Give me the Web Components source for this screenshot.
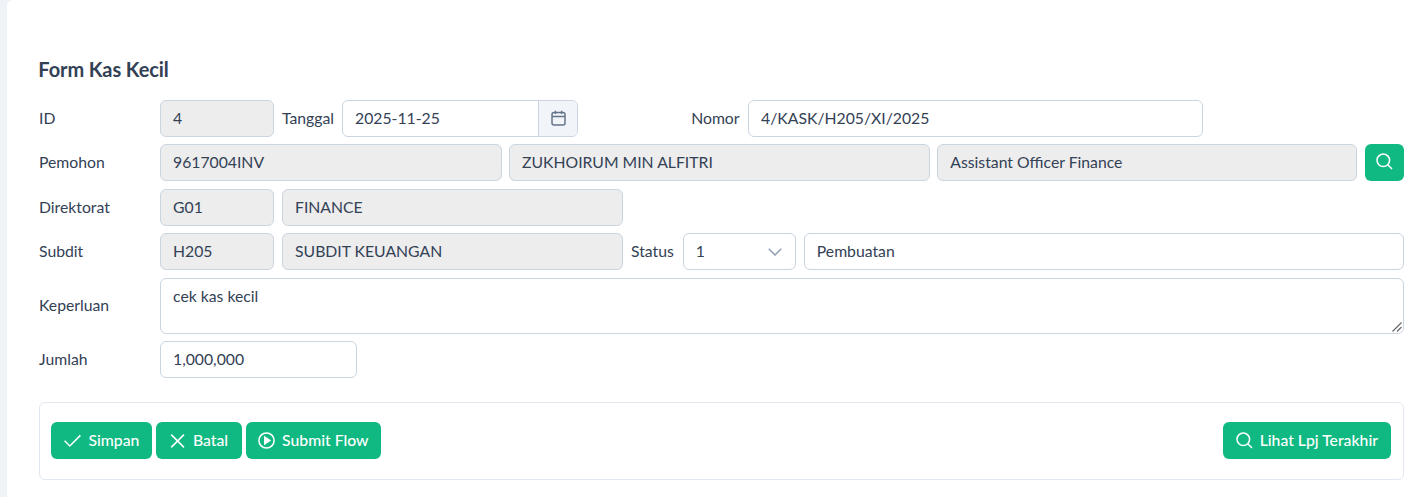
<!DOCTYPE html>
<html lang="id">
<head>
<meta charset="utf-8">
<title>Form Kas Kecil</title>
<style>
  html, body { margin: 0; height: 100%; overflow: hidden; background: #eff3f8; }
  body { font-family: Lato, "Liberation Sans", sans-serif; font-size: 15.75px; color: #334155; }
</style>
</head>
<body>
<kas-page>
  <form-row label="ID">
    <form-field w="114" disabled>4</form-field>
    <inline-label>Tanggal</inline-label>
    <form-field w="236" addon>2025-11-25</form-field>
    <inline-label style="margin-left:105.2px;margin-right:.5px">Nomor</inline-label>
    <form-field w="455">4/KASK/H205/XI/2025</form-field>
  </form-row>
  <form-row label="Pemohon" tight>
    <form-field w="341.75" disabled>9617004INV</form-field>
    <form-field w="421" disabled>ZUKHOIRUM MIN ALFITRI</form-field>
    <form-field w="420" disabled>Assistant Officer Finance</form-field>
    <app-button icon="search" square></app-button>
  </form-row>
  <form-row label="Direktorat">
    <form-field w="114" disabled>G01</form-field>
    <form-field w="341" disabled>FINANCE</form-field>
  </form-row>
  <form-row label="Subdit">
    <form-field w="114" disabled>H205</form-field>
    <form-field w="341" disabled>SUBDIT KEUANGAN</form-field>
    <inline-label style="margin-right:1px">Status</inline-label>
    <form-field w="113" select>1</form-field>
    <form-field w="600">Pembuatan</form-field>
  </form-row>
  <form-row label="Keperluan">
    <form-area>cek kas kecil</form-area>
  </form-row>
  <form-row label="Jumlah">
    <form-field w="197">1,000,000</form-field>
  </form-row>
  <action-bar>
    <app-button icon="check">Simpan</app-button>
    <app-button icon="times">Batal</app-button>
    <app-button icon="play">Submit Flow</app-button>
    <app-button icon="search" slot="end">Lihat Lpj Terakhir</app-button>
  </action-bar>
</kas-page>

<script>
const ICONS = {
  search: '<circle cx="7.3" cy="7.3" r="6.3"/><path d="M11.8 11.8 16 16"/>',
  check: '<path d="M.6 8.8 5.8 14 16.4 3.4"/>',
  times: '<path d="M2.2 2.6 15 15.4M15 2.6 2.2 15.4"/>',
  play: '<circle cx="8.5" cy="8.5" r="7.6"/><path d="M6.8 5.2 11.8 8.5 6.8 11.8Z" fill="currentColor"/>'
};

class KasPage extends HTMLElement {
  connectedCallback() {
    this.attachShadow({ mode: 'open' });
    this.shadowRoot.innerHTML = `
      <style>
        :host {
          display: block;
          box-sizing: border-box;
          height: 497px;
          margin-left: 7px;
          padding: 57px 22px 0 32px;
          background: #fff;
          border-radius: 6px 0 0 0;
        }
        h5 {
          margin: 0 0 18.75px -.7px;
          font-size: 20px;
          line-height: 24px;
          font-weight: 700;
          letter-spacing: -.1px;
          color: #334155;
        }
        .rows { display: flex; flex-direction: column; gap: 7.5px; }
      </style>
      <h5>Form Kas Kecil</h5>
      <div class="rows"><slot></slot></div>
    `;
  }
}

class FormRow extends HTMLElement {
  connectedCallback() {
    this.attachShadow({ mode: 'open' });
    this.shadowRoot.innerHTML = `
      <style>
        :host { display: flex; align-items: center; }
        .label { flex: none; width: 121px; margin-top: -2px; }
        .items { flex: 1; min-width: 0; display: flex; align-items: center; gap: 8px; }
        :host([tight]) .items { gap: 7.25px; }
      </style>
      <div class="label">${this.getAttribute('label')}</div>
      <div class="items"><slot></slot></div>
    `;
  }
}

class InlineLabel extends HTMLElement {
  connectedCallback() {
    this.attachShadow({ mode: 'open' });
    this.shadowRoot.innerHTML = `<style>:host { display: block; flex: none; margin-top: -2px; }</style><slot></slot>`;
  }
}

class FormField extends HTMLElement {
  connectedCallback() {
    this.attachShadow({ mode: 'open' });
    const addon = this.hasAttribute('addon') ? `
      <div class="addon">
        <svg width="15" height="16" viewBox="0 0 15 16" fill="none" stroke="currentColor" stroke-width="1.5">
          <rect x="1" y="2.6" width="13" height="12.4" rx="2"/>
          <path d="M1 6.4H14M4.4 .8V4M10.6 .8V4"/>
        </svg>
      </div>` : '';
    const chevron = this.hasAttribute('select') ? `
      <svg class="chev" width="14" height="8" viewBox="0 0 14 8" fill="none" stroke="currentColor" stroke-width="1.6">
        <path d="M.8 .8 7 7 13.2 .8"/>
      </svg>` : '';
    this.shadowRoot.innerHTML = `
      <style>
        :host {
          display: flex;
          flex: none;
          box-sizing: border-box;
          width: ${this.getAttribute('w')}px;
          height: 37px;
          border: 1px solid #cbd5e1;
          border-radius: 6px;
          background: #fff;
          overflow: hidden;
        }
        :host([disabled]) { background: #ededed; }
        .value { flex: 1; min-width: 0; padding: 0 12px; line-height: 33px; white-space: nowrap; }
        .addon {
          flex: none;
          box-sizing: border-box;
          width: 39px;
          display: flex;
          align-items: center;
          justify-content: center;
          background: #f1f5f9;
          border-left: 1px solid #cbd5e1;
          color: #64748b;
        }
        .chev { flex: none; align-self: center; margin-right: 13px; color: #94a3b8; }
      </style>
      <div class="value"><slot></slot></div>${addon}${chevron}
    `;
  }
}

class FormArea extends HTMLElement {
  connectedCallback() {
    this.attachShadow({ mode: 'open' });
    this.shadowRoot.innerHTML = `
      <style>
        :host { display: block; flex: 1; min-width: 0; position: relative; }
        textarea {
          display: block;
          box-sizing: border-box;
          width: 100%;
          height: 56px;
          margin: 0;
          padding: 7px 12px;
          border: 1px solid #cbd5e1;
          border-radius: 6px;
          outline: none;
          font: inherit;
          color: inherit;
          resize: none;
        }
        svg { position: absolute; right: 2px; bottom: 2px; }
      </style>
      <textarea>${this.textContent}</textarea>
      <svg width="10" height="10" viewBox="0 0 10 10" fill="none" stroke="#5f6368" stroke-width="1.1">
        <path d="M.5 9.5 9.5 .5M5 9.5 9.5 5"/>
      </svg>
    `;
  }
}

class ActionBar extends HTMLElement {
  connectedCallback() {
    this.attachShadow({ mode: 'open' });
    this.shadowRoot.innerHTML = `
      <style>
        :host {
          display: flex;
          justify-content: space-between;
          box-sizing: border-box;
          height: 78px;
          margin-top: 16px;
          padding: 19px 12px 19px 11px;
          border: 1px solid #e2e8f0;
          border-radius: 6px;
        }
        .group { display: flex; gap: 4px; }
      </style>
      <div class="group"><slot></slot></div>
      <div class="group"><slot name="end"></slot></div>
    `;
  }
}

class AppButton extends HTMLElement {
  connectedCallback() {
    this.attachShadow({ mode: 'open' });
    const square = this.hasAttribute('square');
    this.shadowRoot.innerHTML = `
      <style>
        :host {
          display: inline-flex;
          align-items: center;
          justify-content: center;
          gap: 7.5px;
          flex: none;
          box-sizing: border-box;
          height: 37px;
          ${square ? 'width: 39px;' : 'padding: 0 13px;'}
          background: #10b981;
          border-radius: 6px;
          color: #fff;
          font-weight: 500;
          white-space: nowrap;
        }
        svg { flex: none; display: block; }
        slot { display: block; margin-top: -2px; }
        :host([icon="play"]) { padding: 0 12px; }
        :host([icon="play"]) svg { margin-right: -.5px; }
        :host([icon="times"]) svg { margin-right: -1px; }
        :host([icon="times"]) { padding-right: 14px; }
        :host([icon="search"]) svg { margin-right: -1px; }
        :host([square]) svg { margin: -2px 0 0; }
      </style>
      <svg width="17" height="17" viewBox="0 0 17 17" fill="none" stroke="currentColor" stroke-width="1.5">${ICONS[this.getAttribute('icon')]}</svg>
      ${square ? '' : '<slot></slot>'}
    `;
  }
}

customElements.define('kas-page', KasPage);
customElements.define('form-row', FormRow);
customElements.define('inline-label', InlineLabel);
customElements.define('form-field', FormField);
customElements.define('form-area', FormArea);
customElements.define('action-bar', ActionBar);
customElements.define('app-button', AppButton);
</script>
</body>
</html>
